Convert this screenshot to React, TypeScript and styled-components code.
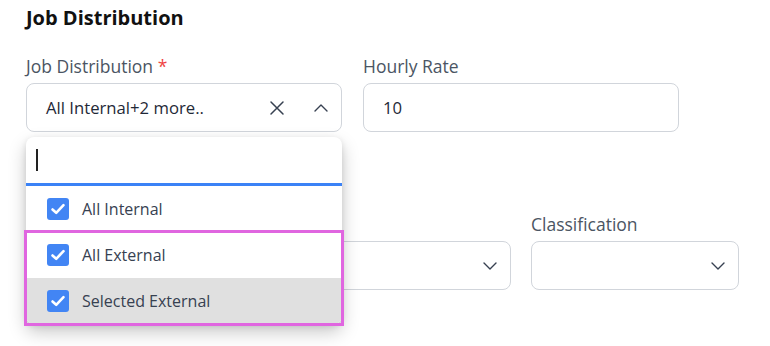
import React from 'react';
import styled, { createGlobalStyle } from 'styled-components';

const GlobalStyle = createGlobalStyle`
  body {
    margin: 0;
    background: #fff;
    font-family: 'Open Sans', 'Noto Sans', sans-serif;
  }
`;

const Page = styled.div`
  width: 770px;
  height: 346px;
  padding: 5px 26px 0;
  box-sizing: border-box;
  overflow: hidden;
`;

const Title = styled.h2`
  margin: 0 0 23px;
  font-size: 20px;
  line-height: 26px;
  font-weight: 700;
  color: #111;
`;

const Row = styled.div<{ $cols: string; $gap: number; $top?: number }>`
  display: grid;
  grid-template-columns: ${(p) => p.$cols};
  column-gap: ${(p) => p.$gap}px;
  margin-top: ${(p) => p.$top ?? 0}px;
`;

const Field = styled.div`
  position: relative;
  display: flex;
  flex-direction: column;
`;

const Label = styled.label`
  font-size: 17.5px;
  line-height: 24px;
  color: #4b5563;
  margin-bottom: 5px;
  min-height: 24px;

  span {
    color: #ef4444;
  }
`;

const Box = styled.div`
  height: 49px;
  box-sizing: border-box;
  border: 1px solid #d1d5db;
  border-radius: 8px;
  background: #fff;
  display: flex;
  align-items: center;
  padding: 0 12px 0 19px;
  font-size: 16.7px;
  color: #1f2937;
`;

const Value = styled.div`
  flex: 1;
`;

const IconBtn = styled.span<{ $gap?: number }>`
  display: flex;
  align-items: center;
  margin-left: ${(p) => p.$gap ?? 0}px;
`;

const Menu = styled.div`
  position: absolute;
  top: calc(100% + 5px);
  left: 0;
  right: 0;
  background: #fff;
  border-radius: 8px;
  box-shadow: 0 8px 18px rgba(0, 0, 0, 0.22), 0 2px 6px rgba(0, 0, 0, 0.1);
  z-index: 10;
`;

const Search = styled.div`
  height: 46px;
  border-bottom: 3px solid #3b82f6;
  display: flex;
  align-items: center;
  padding-left: 10px;
`;

const Caret = styled.span`
  width: 2px;
  height: 22px;
  background: #222;
`;

const Group = styled.div`
  outline: 3px solid #e066e0;
  outline-offset: -1px;
`;

const Option = styled.div<{ $hover?: boolean; $last?: boolean }>`
  height: 46px;
  display: flex;
  align-items: center;
  padding-left: 21px;
  gap: 13px;
  font-size: 16px;
  color: #374151;
  background: ${(p) => (p.$hover ? '#e0e0e0' : '#fff')};
  border-radius: ${(p) => (p.$last ? '0 0 8px 8px' : '0')};
`;

const Check = styled.span`
  width: 22px;
  height: 22px;
  border-radius: 3px;
  background: #4285f4;
  display: flex;
  align-items: center;
  justify-content: center;
`;

const Chevron = ({ up }: { up?: boolean }) => (
  <svg width="16" height="16" viewBox="0 0 16 16" fill="none">
    <path
      d={up ? 'M2 11 L8 5 L14 11' : 'M2 5 L8 11 L14 5'}
      stroke="#374151"
      strokeWidth="1.4"
      strokeLinecap="round"
      strokeLinejoin="round"
    />
  </svg>
);

const Cross = () => (
  <svg width="16" height="16" viewBox="0 0 16 16" fill="none">
    <path d="M2 2 L14 14 M14 2 L2 14" stroke="#374151" strokeWidth="1.5" strokeLinecap="round" />
  </svg>
);

const Tick = () => (
  <svg width="16" height="16" viewBox="0 0 16 16" fill="none">
    <path d="M2.5 8.5 L6.2 11.8 L13.5 4.2" stroke="#fff" strokeWidth="2.6" strokeLinecap="round" strokeLinejoin="round" />
  </svg>
);

const Item = ({ text, hover, last }: { text: string; hover?: boolean; last?: boolean }) => (
  <Option $hover={hover} $last={last}>
    <Check>
      <Tick />
    </Check>
    {text}
  </Option>
);

const App = () => {
  return (
    <Page>
      <GlobalStyle />
      <Title>Job Distribution</Title>
      <Row $cols="316px 316px" $gap={21}>
        <Field>
          <Label>
            Job Distribution <span>*</span>
          </Label>
          <Box>
            <Value>All Internal+2 more..</Value>
            <IconBtn>
              <Cross />
            </IconBtn>
            <IconBtn $gap={28}>
              <Chevron up />
            </IconBtn>
          </Box>
          <Menu>
            <Search>
              <Caret />
            </Search>
            <Item text="All Internal" />
            <Group>
              <Item text="All External" />
              <Item text="Selected External" hover last />
            </Group>
          </Menu>
        </Field>
        <Field>
          <Label>Hourly Rate</Label>
          <Box>
            <Value>10</Value>
          </Box>
        </Field>
      </Row>
      <Row $cols="257px 208px 208px" $gap={20} $top={80}>
        <Field>
          <Label>&nbsp;</Label>
          <Box>
            <Value />
            <IconBtn>
              <Chevron />
            </IconBtn>
          </Box>
        </Field>
        <Field>
          <Label>&nbsp;</Label>
          <Box>
            <Value />
            <IconBtn>
              <Chevron />
            </IconBtn>
          </Box>
        </Field>
        <Field>
          <Label>Classification</Label>
          <Box>
            <Value />
            <IconBtn>
              <Chevron />
            </IconBtn>
          </Box>
        </Field>
      </Row>
    </Page>
  );
};

export default App;
